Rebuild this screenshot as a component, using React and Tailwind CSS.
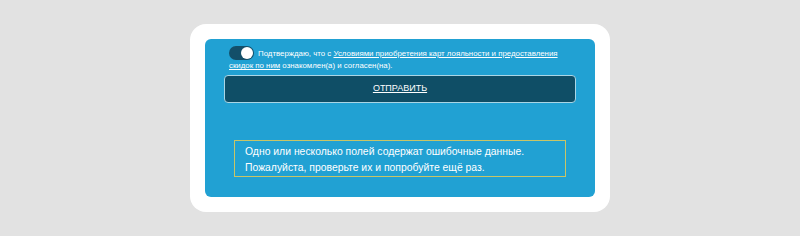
export default function App() {
  return (
    <div className="w-full h-[236px] bg-[#e2e2e2] flex justify-center pt-[24px] font-['Liberation_Sans',Arial,sans-serif]">
      <div className="w-[420px] h-[188px] bg-white rounded-[16px] p-[15px]">
        <div className="h-[158px] bg-[#21a1d3] rounded-[6px] pt-[9px] pl-[24px] pr-[30px]">
          <div className="text-[7.85px] leading-[12px] text-white">
            <span className="inline-block align-middle w-[25px] h-[14px] rounded-full bg-[#134f69] relative mr-[4px] -mt-[2px]">
              <span className="absolute right-[1px] top-[1px] w-[12px] h-[12px] rounded-full bg-white"></span>
            </span>
            Подтверждаю, что с <span className="underline">Условиями приобретения карт лояльности и предоставления скидок по ним</span> ознакомлен(а) и согласен(на).
          </div>
          <button className="mt-[3px] -ml-[5px] w-[352px] h-[28px] bg-[#0f4e66] border border-[#a9d6e6] rounded-[4px] text-white text-[9px] underline flex items-center justify-center">
            ОТПРАВИТЬ
          </button>
          <div className="mt-[37px] ml-[5px] w-[332px] h-[37px] border border-[#c9c567] px-[10px] pt-[3px] text-white text-[10.4px] leading-[16px]">
            <div>Одно или несколько полей содержат ошибочные данные.</div>
            <div>Пожалуйста, проверьте их и попробуйте ещё раз.</div>
          </div>
        </div>
      </div>
    </div>
  );
}
